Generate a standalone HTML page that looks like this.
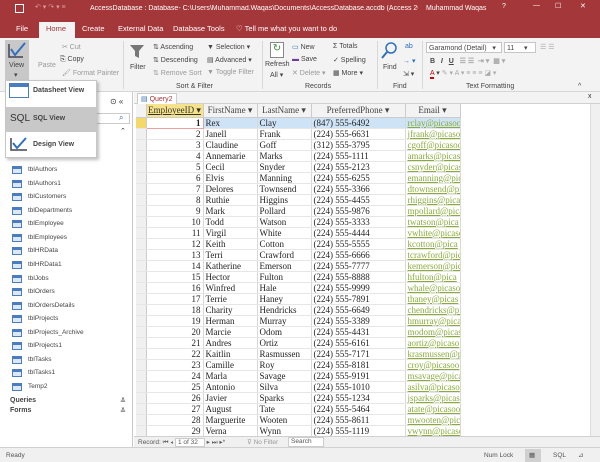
<!DOCTYPE html><html><head><style>
*{margin:0;padding:0;box-sizing:border-box}
body{width:600px;height:462px;overflow:hidden;background:#fff;font-family:"Liberation Sans",sans-serif;font-size:8px;color:#333;position:relative}
.a{position:absolute;white-space:nowrap}
#title{left:0;top:0;width:600px;height:18px;background:#a4373a;color:#fff;font-size:7px}
#tabs{left:0;top:18px;width:600px;height:20px;background:#a4373a;color:#fff;font-size:7.5px}
#ribbon{left:0;top:38px;width:600px;height:54px;background:#f3f3f3;border-bottom:1px solid #d6d6d6}
.g{color:#444;font-size:7px}
.sep{position:absolute;top:41px;width:1px;height:48px;background:#d8d8d8}
#nav{left:0;top:92px;width:133px;height:355px;background:#fff;border-right:1px solid #c8c8c8}
.ni{position:absolute;left:28px;font-size:6.5px;color:#444}
.ic{position:absolute;left:12px;width:10px;height:8px;border:1px solid #4a7cc0;background:linear-gradient(#4a7cc0 0 2px,#dce8f6 2px)}
table{border-collapse:collapse;table-layout:fixed;width:324px;font-family:"Liberation Serif",serif;font-size:9px;color:#222}
td{height:11px;border-right:1px solid #d8d8d8;border-bottom:1px solid #e6e6e6;padding:0 2px;line-height:10px;overflow:hidden;white-space:nowrap}
td.s{background:#f0f0f0;border-right:1px solid #ccc}
td.id{text-align:right}
td.e{color:#8aab3c;text-decoration:underline}
th{height:13px;background:#f3f3f3;border-right:1px solid #ccc;border-bottom:1px solid #ccc;font-weight:normal;font-size:9px;color:#444;overflow:hidden;white-space:nowrap}
</style></head><body>
<div id="title" class="a">
<span class="a" style="left:15px;top:4px;width:9px;height:9px;border:1.5px solid #fff"></span>
<span class="a" style="left:35px;top:3px;color:#d99">↶ ▾ ↷ ▾ ≡</span>
<span class="a" style="left:90px;top:5px;width:328px;overflow:hidden">AccessDatabase : Database- C:\Users\Muhammad.Waqas\Documents\AccessDatabase.accdb (Access 20...</span>
<span class="a" style="left:426px;top:5px">Muhammad Waqas</span>
<span class="a" style="left:502px;top:3px">?</span>
<span class="a" style="left:533px;top:2px">—</span>
<span class="a" style="left:555px;top:2px">☐</span>
<span class="a" style="left:580px;top:2px">✕</span>
</div>
<div id="tabs" class="a">
<span class="a" style="left:16px;top:6px">File</span>
<span class="a" style="left:39px;top:4px;width:36px;height:16px;background:#f3f3f3;color:#a4373a;padding:2px 0 0 7px">Home</span>
<span class="a" style="left:82px;top:6px">Create</span>
<span class="a" style="left:118px;top:6px">External Data</span>
<span class="a" style="left:173px;top:6px">Database Tools</span>
<span class="a" style="left:236px;top:6px">♡ Tell me what you want to do</span>
</div>
<div id="ribbon" class="a"></div>
<div class="a" style="left:5px;top:40px;width:24px;height:40px;background:#c8c8c8"></div>
<svg class="a" style="left:7px;top:41px" width="20" height="18"><path d="M2 3v13h14" stroke="#445" fill="none" stroke-width="1.5"/><path d="M4 8l4 6 10-12" stroke="#2f6fbf" fill="none" stroke-width="2"/></svg>
<span class="a g" style="left:9px;top:62px">View</span><span class="a g" style="left:14px;top:71px">▾</span>
<span class="a g" style="left:38px;top:62px;color:#999">Paste</span>
<span class="a g" style="left:62px;top:43px;color:#999">✂ Cut</span>
<span class="a g" style="left:60px;top:56px">⎘ Copy</span>
<span class="a g" style="left:62px;top:69px;color:#999">🖌 Format Painter</span>
<div class="sep" style="left:123px"></div>
<svg class="a" style="left:129px;top:43px" width="16" height="16"><path d="M1 2h14l-5 6v7l-4-2V8z" fill="#777"/></svg>
<span class="a g" style="left:130px;top:64px">Filter</span>
<span class="a g" style="left:153px;top:43px">⇅ Ascending</span>
<span class="a g" style="left:153px;top:56px">⇅ Descending</span>
<span class="a g" style="left:153px;top:69px;color:#999">⇅ Remove Sort</span>
<span class="a g" style="left:207px;top:43px">▼ Selection ▾</span>
<span class="a g" style="left:207px;top:56px">▤ Advanced ▾</span>
<span class="a g" style="left:207px;top:69px;color:#999">▼ Toggle Filter</span>
<span class="a g" style="left:176px;top:83px">Sort &amp; Filter</span>
<div class="sep" style="left:262px"></div>
<span class="a" style="left:270px;top:42px;width:14px;height:16px;border:1px solid #888;background:#fff;color:#3a8a3a;font-size:10px;text-align:center">↻</span>
<span class="a g" style="left:265px;top:61px">Refresh</span><span class="a g" style="left:270px;top:71px">All ▾</span>
<span class="a g" style="left:292px;top:43px;color:#2f6fbf">▭ <span style="color:#444">New</span></span>
<span class="a g" style="left:292px;top:56px;color:#6b3fa0">▬ <span style="color:#444">Save</span></span>
<span class="a g" style="left:292px;top:69px;color:#999">✕ Delete ▾</span>
<span class="a g" style="left:333px;top:43px">Σ Totals</span>
<span class="a g" style="left:333px;top:56px">✓ Spelling</span>
<span class="a g" style="left:333px;top:69px">▦ More ▾</span>
<span class="a g" style="left:305px;top:83px">Records</span>
<div class="sep" style="left:377px"></div>
<svg class="a" style="left:381px;top:42px" width="16" height="18"><circle cx="10" cy="6" r="5" stroke="#2f6fbf" stroke-width="1.5" fill="none"/><path d="M6 10l-5 6" stroke="#2f6fbf" stroke-width="2"/></svg>
<span class="a g" style="left:383px;top:64px">Find</span>
<span class="a g" style="left:405px;top:43px;color:#2f6fbf">ab</span>
<span class="a g" style="left:403px;top:57px;color:#2f6fbf">→ ▾</span>
<span class="a g" style="left:403px;top:70px">⇲ ▾</span>
<span class="a g" style="left:393px;top:83px">Find</span>
<div class="sep" style="left:422px"></div>
<span class="a g" style="left:426px;top:42px;width:76px;height:11px;background:#fff;border:1px solid #c6c6c6;padding:1px 2px">Garamond (Detail)&nbsp;&nbsp;&nbsp;▾</span>
<span class="a g" style="left:504px;top:42px;width:32px;height:11px;background:#fff;border:1px solid #c6c6c6;padding:1px 2px">11&nbsp;&nbsp;&nbsp;&nbsp;&nbsp;▾</span>
<span class="a g" style="left:540px;top:43px;color:#aaa">☰ ☰</span>
<span class="a g" style="left:430px;top:57px;font-weight:bold">B&nbsp;&nbsp; <i>I</i>&nbsp;&nbsp; <u>U</u>&nbsp;&nbsp; <span style="color:#aaa">☰ ☰&nbsp; ⇥ ▾&nbsp; ▦ ▾</span></span>
<span class="a g" style="left:430px;top:69px"><span style="color:#c00;border-bottom:2px solid #c00">A</span> ▾ <span style="color:#aaa">✎ ▾ A ▾ ≡ ≡ ≡ ◪ ▾</span></span>
<span class="a g" style="left:466px;top:83px">Text Formatting</span>
<span class="a g" style="left:578px;top:83px">^</span>

<div id="nav" class="a">
<span class="a" style="left:60px;top:4px;font-size:13px;color:#a4373a">ts</span>
<span class="a" style="left:110px;top:5px;font-size:8px">⊙ «</span>
<div class="a" style="left:6px;top:21px;width:124px;height:11px;border:1px solid #ccc"></div>
<span class="a" style="left:119px;top:21px;font-size:8px;color:#2f6fbf">⌕</span>
<span class="a" style="left:120px;top:35px;font-size:7px">⌃</span>
</div>
<div class="ic" style="top:166px"></div><span class="ni" style="top:166px">tblAuthors</span>
<div class="ic" style="top:180px"></div><span class="ni" style="top:180px">tblAuthors1</span>
<div class="ic" style="top:193px"></div><span class="ni" style="top:193px">tblCustomers</span>
<div class="ic" style="top:207px"></div><span class="ni" style="top:207px">tblDepartments</span>
<div class="ic" style="top:220px"></div><span class="ni" style="top:220px">tblEmployee</span>
<div class="ic" style="top:234px"></div><span class="ni" style="top:234px">tblEmployees</span>
<div class="ic" style="top:247px"></div><span class="ni" style="top:247px">tblHRData</span>
<div class="ic" style="top:261px"></div><span class="ni" style="top:261px">tblHRData1</span>
<div class="ic" style="top:275px"></div><span class="ni" style="top:275px">tblJobs</span>
<div class="ic" style="top:288px"></div><span class="ni" style="top:288px">tblOrders</span>
<div class="ic" style="top:302px"></div><span class="ni" style="top:302px">tblOrdersDetails</span>
<div class="ic" style="top:315px"></div><span class="ni" style="top:315px">tblProjects</span>
<div class="ic" style="top:329px"></div><span class="ni" style="top:329px">tblProjects_Archive</span>
<div class="ic" style="top:342px"></div><span class="ni" style="top:342px">tblProjects1</span>
<div class="ic" style="top:356px"></div><span class="ni" style="top:356px">tblTasks</span>
<div class="ic" style="top:369px"></div><span class="ni" style="top:369px">tblTasks1</span>
<div class="ic" style="top:383px"></div><span class="ni" style="top:383px">Temp2</span>
<span class="a" style="left:10px;top:397px;font-size:7px;font-weight:bold;color:#444">Queries</span><span class="a" style="left:120px;top:397px;font-size:7px">≚</span>
<span class="a" style="left:10px;top:407px;font-size:7px;font-weight:bold;color:#444">Forms</span><span class="a" style="left:120px;top:407px;font-size:7px">≚</span>

<div class="a" style="left:5px;top:80px;width:92px;height:78px;background:#fff;border:1px solid #c6c6c6;box-shadow:2px 2px 3px rgba(0,0,0,.25)"></div>
<div class="a" style="left:9px;top:83px;width:20px;height:15px;border:1px solid #4a7cc0;background:linear-gradient(#4a7cc0 0 3px,#fff 3px)"></div>
<span class="a" style="left:33px;top:87px;font-size:7px;font-weight:bold;color:#444">Datasheet View</span>
<div class="a" style="left:6px;top:107px;width:90px;height:25px;background:#c8c8c8"></div>
<span class="a" style="left:10px;top:113px;font-size:10px;color:#333">SQL</span>
<span class="a" style="left:33px;top:115px;font-size:7px;font-weight:bold;color:#444">SQL View</span>
<svg class="a" style="left:9px;top:136px" width="20" height="16"><path d="M2 2v12h16" stroke="#445" fill="none" stroke-width="1.5"/><path d="M4 7l4 5 9-10" stroke="#2f6fbf" fill="none" stroke-width="2"/></svg>
<span class="a" style="left:33px;top:141px;font-size:7px;font-weight:bold;color:#444">Design View</span>

<div class="a" style="left:134px;top:92px;width:466px;height:355px;background:#fff"></div>
<div class="a" style="left:134px;top:92px;width:466px;height:12px;background:#f3f3f3;border-bottom:1px solid #d0d0d0"></div>
<div class="a" style="left:137px;top:93px;width:40px;height:12px;background:#fff;border:1px solid #ccc;border-bottom:none;font-size:7px;color:#a4373a;padding:1px 0 0 3px"><span style="color:#2f6fbf">▤</span> Query2</div>
<span class="a" style="left:588px;top:93px;font-size:7px">x</span>
<div class="a" style="left:136px;top:104px;width:326px;height:334px;overflow:hidden">
<table>
<colgroup><col style="width:10px"><col style="width:57px"><col style="width:54px"><col style="width:54px"><col style="width:94px"><col style="width:55px"></colgroup>
<tr><th></th><th style="background:#f5e28a;color:#333;text-decoration:underline">EmployeeID ▾</th><th>FirstName ▾</th><th>LastName ▾</th><th>PreferredPhone ▾</th><th>Email ▾</th></tr>
<tr style="background:#cfe3f7"><td class="s" style="background:#f5d86a"></td><td class="id" style="background:#fff;border:1px solid #e8a0a0"><b>1</b></td><td>Rex</td><td>Clay</td><td>(847) 555-6492</td><td class="e">rclay@picasoo</td></tr>
<tr><td class="s"></td><td class="id">2</td><td>Janell</td><td>Frank</td><td>(224) 555-6631</td><td class="e">jfrank@picasoo</td></tr>
<tr><td class="s"></td><td class="id">3</td><td>Claudine</td><td>Goff</td><td>(312) 555-3795</td><td class="e">cgoff@picasoo</td></tr>
<tr><td class="s"></td><td class="id">4</td><td>Annemarie</td><td>Marks</td><td>(224) 555-1111</td><td class="e">amarks@picasoo</td></tr>
<tr><td class="s"></td><td class="id">5</td><td>Cecil</td><td>Snyder</td><td>(224) 555-2123</td><td class="e">csnyder@picasoo</td></tr>
<tr><td class="s"></td><td class="id">6</td><td>Elvis</td><td>Manning</td><td>(224) 555-6255</td><td class="e">emanning@pic</td></tr>
<tr><td class="s"></td><td class="id">7</td><td>Delores</td><td>Townsend</td><td>(224) 555-3366</td><td class="e">dtownsend@pic</td></tr>
<tr><td class="s"></td><td class="id">8</td><td>Ruthie</td><td>Higgins</td><td>(224) 555-4455</td><td class="e">rhiggins@pica</td></tr>
<tr><td class="s"></td><td class="id">9</td><td>Mark</td><td>Pollard</td><td>(224) 555-9876</td><td class="e">mpollard@pica</td></tr>
<tr><td class="s"></td><td class="id">10</td><td>Todd</td><td>Watson</td><td>(224) 555-3333</td><td class="e">twatson@pica</td></tr>
<tr><td class="s"></td><td class="id">11</td><td>Virgil</td><td>White</td><td>(224) 555-4444</td><td class="e">vwhite@picaso</td></tr>
<tr><td class="s"></td><td class="id">12</td><td>Keith</td><td>Cotton</td><td>(224) 555-5555</td><td class="e">kcotton@pica</td></tr>
<tr><td class="s"></td><td class="id">13</td><td>Terri</td><td>Crawford</td><td>(224) 555-6666</td><td class="e">tcrawford@pic</td></tr>
<tr><td class="s"></td><td class="id">14</td><td>Katherine</td><td>Emerson</td><td>(224) 555-7777</td><td class="e">kemerson@pic</td></tr>
<tr><td class="s"></td><td class="id">15</td><td>Hector</td><td>Fulton</td><td>(224) 555-8888</td><td class="e">hfulton@pica</td></tr>
<tr><td class="s"></td><td class="id">16</td><td>Winfred</td><td>Hale</td><td>(224) 555-9999</td><td class="e">whale@picaso</td></tr>
<tr><td class="s"></td><td class="id">17</td><td>Terrie</td><td>Haney</td><td>(224) 555-7891</td><td class="e">thaney@picas</td></tr>
<tr><td class="s"></td><td class="id">18</td><td>Charity</td><td>Hendricks</td><td>(224) 555-6649</td><td class="e">chendricks@pi</td></tr>
<tr><td class="s"></td><td class="id">19</td><td>Herman</td><td>Murray</td><td>(224) 555-3389</td><td class="e">hmurray@pica</td></tr>
<tr><td class="s"></td><td class="id">20</td><td>Marcie</td><td>Odom</td><td>(224) 555-4431</td><td class="e">modom@picas</td></tr>
<tr><td class="s"></td><td class="id">21</td><td>Andres</td><td>Ortiz</td><td>(224) 555-6161</td><td class="e">aortiz@picaso</td></tr>
<tr><td class="s"></td><td class="id">22</td><td>Kaitlin</td><td>Rasmussen</td><td>(224) 555-7171</td><td class="e">krasmussen@p</td></tr>
<tr><td class="s"></td><td class="id">23</td><td>Camille</td><td>Roy</td><td>(224) 555-8181</td><td class="e">croy@picasoo</td></tr>
<tr><td class="s"></td><td class="id">24</td><td>Marla</td><td>Savage</td><td>(224) 555-9191</td><td class="e">msavage@pica</td></tr>
<tr><td class="s"></td><td class="id">25</td><td>Antonio</td><td>Silva</td><td>(224) 555-1010</td><td class="e">asilva@picaso</td></tr>
<tr><td class="s"></td><td class="id">26</td><td>Javier</td><td>Sparks</td><td>(224) 555-1234</td><td class="e">jsparks@picas</td></tr>
<tr><td class="s"></td><td class="id">27</td><td>August</td><td>Tate</td><td>(224) 555-5464</td><td class="e">atate@picasoo</td></tr>
<tr><td class="s"></td><td class="id">28</td><td>Marguerite</td><td>Wooten</td><td>(224) 555-8611</td><td class="e">mwooten@pica</td></tr>
<tr><td class="s"></td><td class="id">29</td><td>Verna</td><td>Wynn</td><td>(224) 555-1119</td><td class="e">vwynn@picaso</td></tr>
<tr><td class="s"></td><td class="id">30</td><td>Drew</td><td>Dunn</td><td>(224) 555-1120</td><td class="e">ddunn@picaso</td></tr>
</table></div>
<div class="a" style="left:590px;top:104px;width:10px;height:334px;background:#f0f0f0;border-left:1px solid #ddd"></div>
<div class="a" style="left:134px;top:436px;width:466px;height:11px;background:#f0f0f0;border-top:1px solid #d0d0d0;font-size:6.5px;color:#555">
<span class="a" style="left:4px;top:1px">Record: ⏮ ◂ <span style="background:#fff;border:1px solid #ccc;padding:0 6px 0 2px">1 of 32</span> ▸ ⏭ ▸*</span>
<span class="a" style="left:113px;top:1px;color:#999">⊽ No Filter</span>
<span class="a" style="left:154px;top:0;width:36px;height:10px;background:#fff;border:1px solid #ccc;padding:0 2px">Search</span>
</div>
<div class="a" style="left:0;top:447px;width:600px;height:15px;background:#f0f0f0;border-top:1px solid #d0d0d0;font-size:6.5px;color:#555">
<span class="a" style="left:6px;top:4px">Ready</span>
<span class="a" style="left:484px;top:4px">Num Lock</span>
<span class="a" style="left:525px;top:1px;width:16px;height:13px;background:#d0d0d0"></span>
<span class="a" style="left:529px;top:3px">▦</span>
<span class="a" style="left:553px;top:4px">SQL</span>
<span class="a" style="left:578px;top:3px">⊿</span>
</div>
</body></html>
